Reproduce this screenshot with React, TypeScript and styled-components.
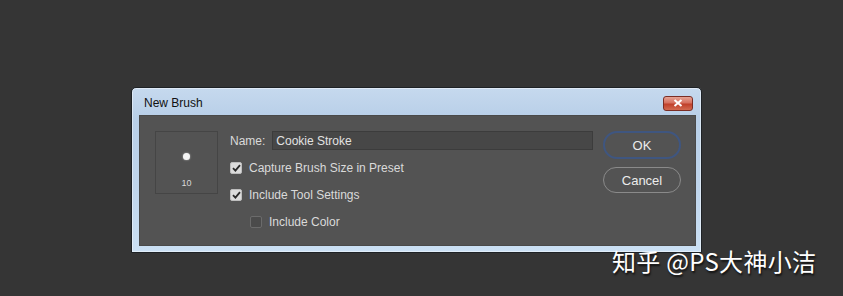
import styled, { createGlobalStyle } from 'styled-components'

const GlobalStyle = createGlobalStyle`
  html, body {
    margin: 0;
    padding: 0;
    background: #353535;
  }
  body {
    font-family: "Liberation Sans", Arial, sans-serif;
  }
`

const Page = styled.div`
  position: relative;
  width: 843px;
  height: 296px;
  box-sizing: border-box;
  padding: 87px 0 0 131px;
  background: #353535;
  overflow: hidden;
`

const Frame = styled.div`
  width: 571px;
  height: 166px;
  box-sizing: border-box;
  display: flex;
  flex-direction: column;
  border: 1px solid #1e2226;
  border-radius: 5px 5px 0 0;
  background: linear-gradient(180deg, #c6d9ee 0%, #b8cfe8 18%, #bfd5ec 60%, #cbe0f4 100%);
  box-shadow: inset 0 0 0 1px rgba(255, 255, 255, 0.45);
`

const TitleBar = styled.div`
  height: 27px;
  display: flex;
  align-items: center;
  padding: 0 8px 0 12px;
`

const Title = styled.span`
  flex: 1;
  font-size: 12px;
  color: #111;
  padding-top: 2px;
`

const CloseButton = styled.div`
  width: 30px;
  height: 15px;
  box-sizing: border-box;
  display: flex;
  align-items: center;
  justify-content: center;
  border: 1px solid #7b2d24;
  border-radius: 3px;
  margin-top: 3px;
  background: linear-gradient(180deg, #e6a394 0%, #d6705f 45%, #c0402a 55%, #d26a50 100%);
`

const Body = styled.div`
  flex: 1;
  margin: 0 5px 6px 7px;
  display: flex;
  align-items: flex-start;
  padding: 15px 14px 0 15px;
  background: #535353;
  border: 1px solid #4a4a4a;
  box-sizing: border-box;
`

const PreviewBox = styled.div`
  width: 63px;
  height: 63px;
  box-sizing: border-box;
  border: 1px solid #454545;
  display: flex;
  flex-direction: column;
  align-items: center;
  flex-shrink: 0;
`

const Dot = styled.div`
  width: 7px;
  height: 7px;
  border-radius: 50%;
  background: #f4f4f4;
  margin-top: 21px;
  box-shadow: 0 0 2px rgba(255, 255, 255, 0.6);
`

const SizeLabel = styled.span`
  font-size: 9px;
  color: #d8d8d8;
  margin-top: 18px;
`

const Form = styled.div`
  flex: 1;
  margin: -4px 10px 0 12px;
  display: flex;
  flex-direction: column;
`

const Row = styled.div<{ indent?: boolean }>`
  height: 27px;
  display: flex;
  align-items: center;
  padding-left: ${({ indent }) => (indent ? '20px' : '0')};
`

const Label = styled.span`
  font-size: 12px;
  color: #dadada;
  margin-right: 7px;
`

const NameInput = styled.div`
  flex: 1;
  height: 19px;
  box-sizing: border-box;
  display: flex;
  align-items: center;
  padding-left: 3px;
  background: #474747;
  border: 1px solid #3c3c3c;
  font-size: 12px;
  color: #e2e2e2;
`

const Box = styled.div<{ checked?: boolean }>`
  width: 12px;
  height: 12px;
  box-sizing: border-box;
  border-radius: 2px;
  margin-right: 7px;
  display: flex;
  align-items: center;
  justify-content: center;
  background: ${({ checked }) => (checked ? '#dcdcdc' : '#4b4b4b')};
  border: 1px solid ${({ checked }) => (checked ? '#bdbdbd' : '#6b6b6b')};
`

const Buttons = styled.div`
  width: 78px;
  display: flex;
  flex-direction: column;
  gap: 8px;
  flex-shrink: 0;
`

const Button = styled.div<{ focused?: boolean }>`
  height: ${({ focused }) => (focused ? '28px' : '26px')};
  box-sizing: border-box;
  display: flex;
  align-items: center;
  justify-content: center;
  border-radius: 14px;
  border: ${({ focused }) => (focused ? '2px solid #3f5680' : '1px solid #8a8a8a')};
  font-size: 13px;
  color: #ececec;
`

const Watermark = styled.div`
  position: absolute;
  left: 612px;
  top: 249px;
  font-family: "Noto Sans CJK SC", "Noto Sans", sans-serif;
  font-size: 24px;
  line-height: 24px;
  color: #ffffff;
  letter-spacing: 0.3px;
  text-shadow: 1px 2px 2px rgba(0, 0, 0, 0.7);
`

const Check = () => (
  <svg width="9" height="8" viewBox="0 0 9 8">
    <path d="M1 4.2 L3.4 6.6 L8 1.2" fill="none" stroke="#2a2a2a" strokeWidth="1.8" />
  </svg>
)

const CloseX = () => (
  <svg width="10" height="8" viewBox="0 0 10 8">
    <path d="M1.5 1 L8.5 7 M8.5 1 L1.5 7" stroke="#ffffff" strokeWidth="2" />
  </svg>
)

const CheckRow = ({ label, checked, indent }: { label: string; checked?: boolean; indent?: boolean }) => (
  <Row indent={indent}>
    <Box checked={checked}>{checked && <Check />}</Box>
    <Label>{label}</Label>
  </Row>
)

export default function App() {
  return (
    <Page>
      <GlobalStyle />
      <Frame>
        <TitleBar>
          <Title>New Brush</Title>
          <CloseButton>
            <CloseX />
          </CloseButton>
        </TitleBar>
        <Body>
          <PreviewBox>
            <Dot />
            <SizeLabel>10</SizeLabel>
          </PreviewBox>
          <Form>
            <Row>
              <Label>Name:</Label>
              <NameInput>Cookie Stroke</NameInput>
            </Row>
            <CheckRow label="Capture Brush Size in Preset" checked />
            <CheckRow label="Include Tool Settings" checked />
            <CheckRow label="Include Color" indent />
          </Form>
          <Buttons>
            <Button focused>OK</Button>
            <Button>Cancel</Button>
          </Buttons>
        </Body>
      </Frame>
      <Watermark>知乎 @PS大神小洁</Watermark>
    </Page>
  )
}
